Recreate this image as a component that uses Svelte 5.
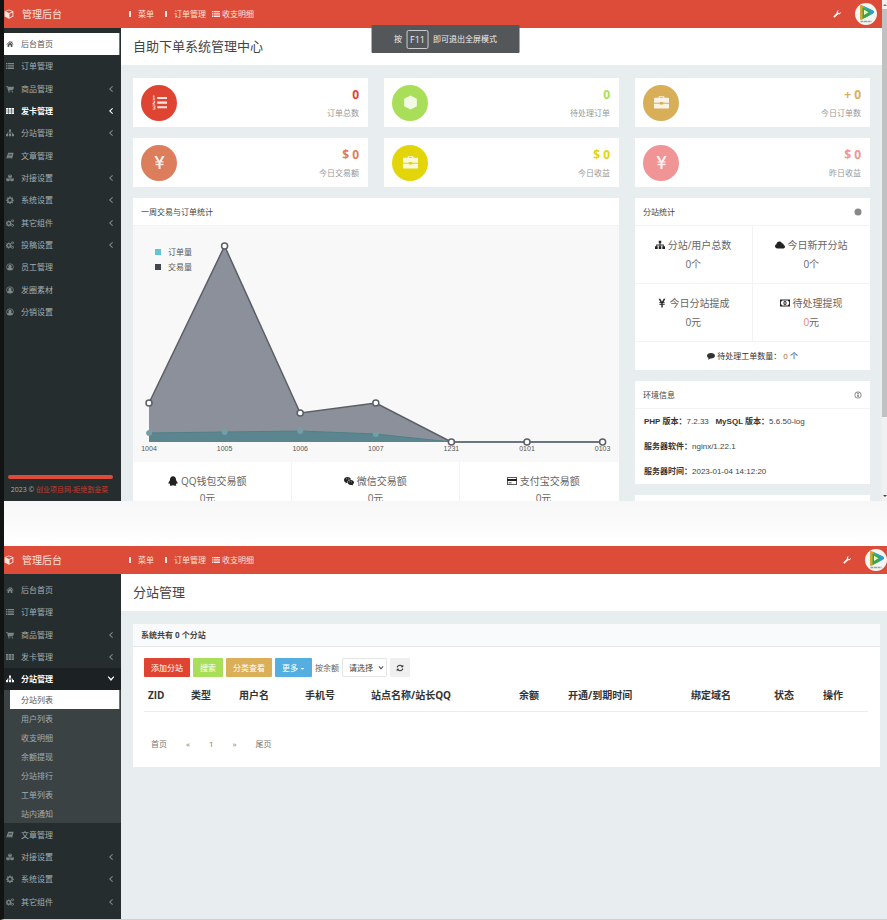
<script>
    // Iconos en una caja de 16 x 16
    const icons = {
        home: 'M8 2 1 8.3l.9 1L8 4l6.1 5.3.9-1-2.5-2.2V3h-2v1.3zM3.2 9.3 8 5.2l4.8 4.1V14H9.6v-3.6H6.4V14H3.2z',
        list: 'M0 2h3v2H0zM4 2h12v2H4zM0 5.4h3v2H0zM4 5.4h12v2H4zM0 8.8h3v2H0zM4 8.8h12v2H4zM0 12.2h3v2H0zM4 12.2h12v2H4z',
        cart: 'M0 2h3.2l.5 1.7H16L14.5 9.5 5.4 10.4l.2 1H14v1.3H4.4L2.2 3.4H0zM5 13h2v2H5zM12 13h2v2h-2z',
        table: 'M0 2h4.6v3.4H0zM5.6 2h4.6v3.4H5.6zM11.2 2H16v3.4h-4.8zM0 6.3h4.6v3.4H0zM5.6 6.3h4.6v3.4H5.6zM11.2 6.3H16v3.4h-4.8zM0 10.6h4.6V14H0zM5.6 10.6h4.6V14H5.6zM11.2 10.6H16V14h-4.8z',
        sitemap: 'M6 1h4v4.3H8.7v2H14V10h2v4.3h-4.3V10h1V8.6h-4V10H10v4.3H6V10h1.3V8.6h-4V10h1v4.3H0V10h2V7.3h5.3v-2H6z',
        book: 'M4.5 1.5h10.8L12.4 13H2.2C.9 13 .5 12 .9 10.8zM5.6 4l-.3 1h6.6l.3-1zM5 6.4l-.3 1h6.6l.3-1zM2.2 11.4h8.6l-.3.9H2.3z',
        cubes: 'M8 .8 11.6 2.5v4L8 8.2 4.4 6.5v-4zM8 2 6 3l2 1 2-1zM4 7.3l3.6 1.8v4L4 14.8.4 13v-4zM4 8.6l-2 .9 2 1 2-1zM12 7.3l3.6 1.8v4L12 14.8 8.4 13v-4zM12 8.6l-2 .9 2 1 2-1z',
        gear: 'M6.8 1h2.4l.4 2 1.2.5 1.7-1.1 1.7 1.7-1.1 1.7.5 1.2 2 .4v2.2l-2 .4-.5 1.2 1.1 1.7-1.7 1.7-1.7-1.1-1.2.5-.4 2H6.8l-.4-2-1.2-.5-1.7 1.1-1.7-1.7 1.1-1.7-.5-1.2-2-.4V7.3l2-.4.5-1.2L1.8 4l1.7-1.7 1.7 1.1 1.2-.5zM8 5.200a3.200 3.200 0 1 0 0 6.400 3.200 3.200 0 0 0 0-6.400z',
        gears: 'M4.6 3h1.800l.4 1.500 1 .4 1.300-.8L10.300 5.400l-.8 1.300.4 1 1.500.4v1.800l-1.500.4-.4 1 .8 1.300-1.200 1.200-1.300-.8-1 .4-.4 1.500H4.600l-.4-1.500-1-.4-1.300.8L.7 12.600l.8-1.300-.4-1L0 9.900V8.100l1.100-.4.4-1L.7 5.400 1.900 4.100l1.300.8 1-.4zM5.500 6.700a2.300 2.300 0 1 0 0 4.600 2.300 2.300 0 0 0 0-4.600zM13 .8l1.900.9L16 3.500l-1.100 2-1.900.9-1.900-.9-.7-2 .7-1.800zM13 2.400a1.200 1.200 0 1 0 0 2.400 1.200 1.200 0 0 0 0-2.400zM13 9.800l1.900.9 1.100 1.800-1.100 2-1.900.9-1.900-.9-.7-2 .7-1.800zM13 11.400a1.200 1.200 0 1 0 0 2.400 1.200 1.200 0 0 0 0-2.400z',
        user: 'M8 .8a7.200 7.200 0 1 0 0 14.400A7.200 7.200 0 0 0 8 .8zM8 2a6 6 0 0 1 4.900 9.400c-.5-1.500-1.300-2.300-2.500-2.500a3.300 3.300 0 1 0-4.800 0c-1.200.2-2 1-2.500 2.500A6 6 0 0 1 8 2z',
        bar: 'M6 2h4v12H6z',
        wrench: 'M15.600 4.200c.2 3-2.600 5.200-5.400 4.200L4 14.600c-1.600 1.600-4.200-.9-2.600-2.600l6.300-6.200C6.700 2.900 9 .2 12 .5L9.800 2.800l.4 2.700 2.800.5z',
        cube: 'M8 .8 15 3.700v8.200l-7 3.500-7-3.500V3.700zM8 2 3 4.100l5 2.100 5-2.100zM8.800 7.600v6l4.800-2.400V5.600z',
        hexagon: 'M8 .5 14.800 4v8L8 15.500 1.200 12V4z',
        listOl: 'M5.500 2H16v2.200H5.500zM5.500 7H16v2.200H5.500zM5.500 12H16v2.200H5.500zM1 .5h1.500V4h.8v.8H.7V4h.8V1.500H.8zM.6 6h2.800v1.900L1.800 9.200h1.600v.8H.6V8.900l1.800-1.500v-.6H.6zM.6 11.200h2.900v4.300H.6v-.8h2v-1H1.200V13h1.400v-1h-2z',
        yen: 'M2.500 1h2.700L8 6l2.800-5h2.700L10.300 6.600h2v1.500H9.100v1.200h3.200v1.500H9.100V15H6.900v-4.200H3.700V9.300h3.200V8.100H3.700V6.600h2z',
        briefcase: 'M5 3V1.200h6V3h4a1 1 0 0 1 1 1v4.200H9.800V7.400H6.200v.8H0V4a1 1 0 0 1 1-1zM6.200 3h3.600v-.8H6.200zM0 9.200h6.200v1h3.600v-1H16v4.300a1 1 0 0 1-1 1H1a1 1 0 0 1-1-1z',
        cloud: 'M4 13.500C1.600 13.500 0 12 0 10c0-1.700 1-2.800 2.300-3.300C2.500 4 4.400 2.300 6.900 2.300c2 0 3.500 1.100 4.100 2.800 1.900-.1 3 1.200 2.800 2.800 1.300.4 2.200 1.400 2.200 2.700 0 1.700-1.400 2.900-3.200 2.900z',
        money: 'M0 2.500h16v11H0zM3.200 4C3.200 5 2.500 5.700 1.500 5.700v4.600c1 0 1.700.7 1.700 1.700h9.600c0-1 .7-1.700 1.700-1.700V5.700c-1 0-1.700-.7-1.700-1.700zM8 4.700c1.600 0 2.500 1.400 2.500 3.300S9.600 11.300 8 11.300 5.500 9.900 5.500 8 6.400 4.700 8 4.700zM7.300 6.200v3.600h1.500V6.200z',
        comment: 'M8 2c4.600 0 8 2.400 8 5.600s-3.400 5.500-8 5.500l-1.400-.1C5.300 14.200 3.500 15 1.500 15c.9-.9 1.400-1.800 1.500-2.900C1.100 11.100 0 9.500 0 7.600 0 4.400 3.400 2 8 2z',
        qq: 'M8 .5c3 0 4.800 2.200 4.800 5.200l.3 1.300c1.600 1.900 2.600 4.200 2.100 5.100-.3.500-1 0-1.600-.7-.2.700-.6 1.400-1.200 2 1 .5 1.200 1.200.6 1.700-.8.6-3.600.6-5 -.2-1.400.8-4.200.8-5 .2-.6-.5-.4-1.200.6-1.700-.6-.6-1-1.300-1.200-2-.6.7-1.300 1.200-1.600.7-.5-.9.500-3.200 2.100-5.100l.3-1.300C3.200 2.700 5 .5 8 .5z',
        wechat: 'M5.700 1.500c3 0 5.300 1.700 5.600 4-3.500 0-6 2.200-6 4.700l.1.800-1-.1-2.200 1.200.6-1.900C1 9.200 0 7.900 0 6.200c0-2.700 2.500-4.700 5.700-4.700zM3.700 3.900v1.300H5V3.900zM7 3.900v1.300h1.300V3.900zM11 6.500c2.800 0 5 1.700 5 4 0 1.300-.8 2.400-2 3.200l.5 1.600-1.800-1-1.700.2c-2.800 0-5-1.700-5-4s2.200-4 5-4zM8.800 8.800v1h1v-1zM11.800 8.800v1h1v-1z',
        card: 'M0 2h16v12H0zM1.200 3.200v1.600h13.600V3.200zM1.200 8v4.800h13.600V8zM2.500 10.500h5v1h-5z',
        refresh: 'M1.500 7C1.900 3.700 4.600 1.500 8 1.500c1.800 0 3.300.7 4.500 1.800L14.500 1.500v5.200H9.300l1.900-1.900C10.300 4 9.200 3.500 8 3.500 5.700 3.500 4 4.900 3.600 7zM14.500 9c-.4 3.300-3.100 5.500-6.500 5.500-1.800 0-3.300-.7-4.500-1.800l-2 1.800V9.300h5.200l-1.900 1.900c.9.800 2 1.300 3.200 1.300 2.300 0 4-1.400 4.400-3.500z',
        left: 'M10.500 2 12 3.500 7 8l5 4.500-1.500 1.500L4 8z',
        down: 'M1.500 4.200 3 2.700l5 5 5-5 1.500 1.500L8 12z',
        caret: 'M2 6h12l-6 6z',
        dot: 'M8 1a7 7 0 1 0 0 14A7 7 0 0 0 8 1z',
        info: 'M8 1a7 7 0 1 0 0 14A7 7 0 0 0 8 1zM8 2.800a5.200 5.200 0 1 1 0 10.400A5.200 5.200 0 0 1 8 2.800zM6.400 4h3.200v2.200H6.400zM6.400 7.200h3.200V12H6.400z'
    };

    const menu = [
        { icon: 'home', text: '后台首页' },
        { icon: 'list', text: '订单管理' },
        { icon: 'cart', text: '商品管理', more: true },
        { icon: 'table', text: '发卡管理', more: true },
        { icon: 'sitemap', text: '分站管理', more: true },
        { icon: 'book', text: '文章管理' },
        { icon: 'cubes', text: '对接设置', more: true },
        { icon: 'gear', text: '系统设置', more: true },
        { icon: 'gears', text: '其它组件', more: true },
        { icon: 'gears', text: '投稿设置', more: true },
        { icon: 'user', text: '员工管理' },
        { icon: 'user', text: '发圈素材' },
        { icon: 'user', text: '分销设置' }
    ];
    const submenu = ['分站列表', '用户列表', '收支明细', '余额提现', '分站排行', '工单列表', '站内通知'];

    const stats = [
        { color: 'red', icon: 'listOl', value: '0', label: '订单总数' },
        { color: 'green', icon: 'hexagon', value: '0', label: '待处理订单' },
        { color: 'gold', icon: 'briefcase', value: '+ 0', label: '今日订单数' },
        { color: 'orange', icon: 'yen', value: '$ 0', label: '今日交易额' },
        { color: 'yellow', icon: 'briefcase', value: '$ 0', label: '今日收益' },
        { color: 'pink', icon: 'yen', value: '$ 0', label: '昨日收益' }
    ];
    const pays = [
        { icon: 'qq', text: 'QQ钱包交易额' },
        { icon: 'wechat', text: '微信交易额' },
        { icon: 'card', text: '支付宝交易额' }
    ];
    const sites = [
        { icon: 'sitemap', text: '分站/用户总数', unit: '个' },
        { icon: 'cloud', text: '今日新开分站', unit: '个' },
        { icon: 'yen', text: '今日分站提成', unit: '元' },
        { icon: 'money', text: '待处理提现', unit: '元', alert: true }
    ];

    // Datos de la gráfica semanal
    const days = ['1004', '1005', '1006', '1007', '1231', '0101', '0103'];
    const amount = [39, 196, 29, 39, 0, 0, 0];
    const orders = [9, 10, 11, 8, 0, 0, 0];
    const base = 216;
    const px = (i) => 16 + i * 75.6;
    const line = (values) => values.map((v, i) => `${px(i)},${base - v}`).join(' ');
    const area = (values) => `${px(0)},${base} ${line(values)} ${px(6)},${base}`;

    const columns = [
        ['ZID', 43], ['类型', 48], ['用户名', 66], ['手机号', 66], ['站点名称/站长QQ', 148],
        ['余额', 49], ['开通/到期时间', 123], ['绑定域名', 83], ['状态', 49], ['操作', 49]
    ];
    const total = columns.reduce((sum, c) => sum + c[1], 0);
</script>

{#snippet icon(name)}
    <svg class="icon" viewBox="0 0 16 16" aria-hidden="true"><path d={icons[name]} fill-rule="evenodd" /></svg>
{/snippet}

{#snippet topbar()}
    <header class="topbar">
        <a class="brand" href="#home">{@render icon('cube')}<span>管理后台</span></a>
        <nav class="topnav">
            <a href="#menu">{@render icon('bar')}菜单</a>
            <a href="#orders">{@render icon('bar')}订单管理</a>
            <a class="wide" href="#details">{@render icon('list')}收支明细</a>
        </nav>
        <button class="tool" aria-label="设置">{@render icon('wrench')}</button>
        <svg class="avatar" viewBox="0 0 22 22" aria-hidden="true">
            <circle cx="11" cy="11" r="11" fill="#f3f6f1" />
            <path d="M5 3.200Q5 2 6.500 2.200L18 7.600Q20 9 18 10.600L7 16.500Q5 17 5 15.500z" fill="#5cc243" />
            <path d="M7.500 2.500 18 7.600Q20 9 18 10.600L13 13.300 14 8z" fill="#2d9bd6" />
            <path d="M5 3.200Q5 2 6.500 2.200L8 3v12.800L7 16.500Q5 17 5 15.500z" fill="#d9a52d" />
            <path d="M7.500 4.500 15 8l-1.500 5L7.500 16z" fill="#36a64a" />
            <path d="M9 6.800 13.500 9.300 9 12z" fill="#e9fbc9" />
            <path d="M5.500 18.500h11" stroke="#9aa39e" stroke-width="1.500" stroke-dasharray="3 .5" />
        </svg>
    </header>
{/snippet}

{#snippet sidebar(current, lit, open)}
    <aside class="sidebar">
        <ul class="menu">
            {#each menu as item}
                <li>
                    <a class="item" class:current={item.text === current} class:lit={item.text === lit}
                        class:open={item.text === open} href="#{item.text}">
                        {@render icon(item.icon)}
                        <span>{item.text}</span>
                        {#if item.more}
                            <i class="arrow">{@render icon(item.text === open ? 'down' : 'left')}</i>
                        {/if}
                    </a>
                    {#if item.text === open}
                        <ul class="submenu">
                            {#each submenu as sub, i}
                                <li><a class:current={i === 0} href="#{sub}">{sub}</a></li>
                            {/each}
                        </ul>
                    {/if}
                </li>
            {/each}
        </ul>
        {#if !open}
            <div class="sidefoot">
                <div class="progress"></div>
                <p>2023 © <a href="#site">创业项目网-拒绝割韭菜</a></p>
            </div>
        {/if}
    </aside>
{/snippet}

<div class="page">
    <section class="screen first">
        <div class="window">
            {@render topbar()}
            <div class="body">
                {@render sidebar('后台首页', '发卡管理', '')}
                <main>
                    <h1>自助下单系统管理中心</h1>
                    <div class="grid">
                        {#each stats as s}
                            <div class="stat {s.color}">
                                <div class="round">{@render icon(s.icon)}</div>
                                <div class="figure">
                                    <strong>{s.value}</strong>
                                    <small>{s.label}</small>
                                </div>
                            </div>
                        {/each}

                        <div class="panel chart">
                            <h2>一周交易与订单统计</h2>
                            <svg viewBox="0 0 486 236" role="img" aria-label="一周交易与订单统计">
                                <rect width="486" height="236" fill="#f8f8f8" />
                                <polygon points={area(amount)} fill="#8b909a" />
                                <polygon points={area(orders)} fill="#5b868f" />
                                <polyline points={line(orders)} fill="none" stroke="#4f8089" />
                                <polyline points={line(amount)} fill="none" stroke="#5a5f66" stroke-width="1.500" />
                                {#each days as day, i}
                                    {#if orders[i]}
                                        <circle cx={px(i)} cy={base - orders[i]} r="2.500" fill="#7b9aa3" stroke="#6fa5ae" />
                                    {/if}
                                    <circle cx={px(i)} cy={base - amount[i]} r="3" fill="#fff" stroke="#5a5f66" stroke-width="1.500" />
                                    <text class="day" x={px(i)} y="225" text-anchor="middle">{day}</text>
                                {/each}
                                <rect x="22" y="23" width="6" height="6" fill="#62c4d4" />
                                <rect x="22" y="38" width="6" height="6" fill="#414750" />
                                <text x="35" y="29">订单量</text>
                                <text x="35" y="44">交易量</text>
                            </svg>
                            <div class="pays">
                                {#each pays as p}
                                    <div>
                                        <p>{@render icon(p.icon)} {p.text}</p>
                                        <p>0元</p>
                                    </div>
                                {/each}
                            </div>
                        </div>

                        <div class="side">
                            <div class="panel">
                                <h2>分站统计 {@render icon('dot')}</h2>
                                <div class="sites">
                                    {#each sites as s}
                                        <div>
                                            <p>{@render icon(s.icon)} {s.text}</p>
                                            <p><span class:alert={s.alert}>0</span>{s.unit}</p>
                                        </div>
                                    {/each}
                                </div>
                                <p class="tickets">{@render icon('comment')} 待处理工单数量： <em>0</em> 个</p>
                            </div>
                            <div class="panel">
                                <h2>环境信息 {@render icon('info')}</h2>
                                <div class="env">
                                    <p><b>PHP 版本：</b>7.2.33 &nbsp; <b>MySQL 版本：</b>5.6.50-log</p>
                                    <p><b>服务器软件：</b>nginx/1.22.1</p>
                                    <p><b>服务器时间：</b>2023-01-04 14:12:20</p>
                                </div>
                            </div>
                            <div class="panel next"></div>
                        </div>
                    </div>
                </main>
            </div>
        </div>
        <div class="scrollbar">
            <span></span>
            <div class="thumb"></div>
            <span class="end"></span>
        </div>
        <div class="toast">按 <kbd>F11</kbd> 即可退出全屏模式</div>
    </section>

    <div class="gap"></div>

    <section class="screen second">
        <div class="window">
            {@render topbar()}
            <div class="body">
                {@render sidebar('', '', '分站管理')}
                <main>
                    <h1>分站管理</h1>
                    <div class="list">
                        <h2>系统共有 0 个分站</h2>
                        <div class="listbody">
                            <div class="tools">
                                <button class="btn red">添加分站</button>
                                <button class="btn green">搜索</button>
                                <button class="btn gold">分类查看</button>
                                <button class="btn blue">更多 {@render icon('caret')}</button>
                                <label for="balance">按余额</label>
                                <div class="choice">
                                    <select id="balance">
                                        <option>请选择</option>
                                    </select>
                                    {@render icon('down')}
                                </div>
                                <button class="btn plain" aria-label="刷新">{@render icon('refresh')}</button>
                            </div>
                            <table>
                                <colgroup>
                                    {#each columns as c}
                                        <col style:width="{(c[1] / total) * 100}%" />
                                    {/each}
                                </colgroup>
                                <thead>
                                    <tr>
                                        {#each columns as c}
                                            <th>{c[0]}</th>
                                        {/each}
                                    </tr>
                                </thead>
                            </table>
                            <nav class="pager">
                                <a href="#first">首页</a>
                                <a href="#prev">«</a>
                                <a href="#1">1</a>
                                <a href="#next">»</a>
                                <a href="#last">尾页</a>
                            </nav>
                        </div>
                    </div>
                </main>
            </div>
        </div>
    </section>
</div>

<style>
    :global(body) {
        margin: 0;
        background: #fff;
    }
    .page {
        border-left: 4px solid #121313;
        border-bottom: 1px solid #d8cfcc;
        font: 8px/16px "Open Sans", "Noto Sans CJK SC", sans-serif;
        color: #666;
    }
    .page * {
        box-sizing: border-box;
    }
    h1, h2, p, ul {
        margin: 0;
        padding: 0;
        font-weight: normal;
    }
    ul {
        list-style: none;
    }
    a {
        color: inherit;
        text-decoration: none;
    }
    button {
        border: 0;
        padding: 0;
        background: none;
        color: inherit;
        font: inherit;
    }
    .icon {
        width: 8px;
        height: 8px;
        fill: currentColor;
        flex: none;
    }

    .screen {
        position: relative;
        display: flex;
        overflow: hidden;
    }
    .first {
        max-height: 501px;
    }
    .second {
        max-height: 373px;
    }
    .window {
        flex: 1;
        min-width: 0;
        display: flex;
        flex-direction: column;
    }
    .body {
        flex: 1;
        min-height: 0;
        display: flex;
    }
    .gap {
        height: 45px;
        background: linear-gradient(#f7f7f7, #fff);
    }

    /* barra superior */
    .topbar {
        flex: none;
        height: 28px;
        display: flex;
        align-items: center;
        background: #dd4b39;
        color: #fbe3df;
    }
    .first .topbar {
        padding-right: 5px;
    }
    .brand {
        width: 117px;
        display: flex;
        align-items: center;
        gap: 8px;
        font-size: 10px;
    }
    .brand .icon {
        width: 10px;
        height: 10px;
    }
    .topnav {
        flex: 1;
        display: flex;
        gap: 8px;
        padding-left: 5px;
    }
    .topnav a {
        display: flex;
        align-items: center;
        gap: 4px;
    }
    .topnav a.wide {
        gap: 2px;
        margin-left: -2px;
    }
    .tool {
        display: flex;
        margin-right: 14px;
        color: #fff;
    }
    .avatar {
        width: 22px;
        height: 22px;
    }

    /* menú lateral */
    .sidebar {
        width: 117px;
        flex: none;
        display: flex;
        flex-direction: column;
        justify-content: space-between;
        overflow: hidden;
        background: #252d2f;
        color: #a3adaf;
    }
    .menu {
        padding-top: 5px;
    }
    .item {
        height: 22px;
        display: flex;
        align-items: center;
        gap: 7px;
    }
    .menu > li:nth-child(3n) > .item {
        height: 23px;
    }
    .item .icon {
        margin-left: 2px;
        opacity: 0.7;
    }
    .arrow {
        display: flex;
        margin-left: auto;
        margin-right: 6px;
    }
    .current {
        margin-right: 1px;
        border-right: 1px solid #dd4b39;
        background: #fff;
        color: #555;
    }
    .lit, .open {
        color: #fff;
        font-weight: bold;
    }
    .current .icon, .lit .icon, .open .icon {
        opacity: 1;
    }
    .open {
        background: #1c2224;
    }
    .submenu {
        padding-left: 6px;
        background: #3a4243;
    }
    .submenu a {
        display: block;
        padding-left: 11px;
        line-height: 19px;
    }
    .sidefoot {
        padding: 0 4px 3px;
        font-size: 7px;
        text-align: center;
    }
    .progress {
        height: 4px;
        margin: 0 4px 3px 0;
        border-radius: 2px;
        background: #dd4b39;
    }
    .sidefoot p {
        padding-right: 6px;
    }
    .sidefoot a {
        color: #c93a2c;
    }

    main {
        flex: 1;
        min-width: 0;
        background: #e8edf0;
    }
    h1 {
        padding-left: 12px;
        background: #fff;
        font-size: 13px;
        line-height: 37px;
        color: #444;
    }
    .grid {
        display: grid;
        grid-template-columns: repeat(3, 1fr);
        gap: 11px 16px;
        padding: 13px 12px 0;
    }
    .stat {
        display: flex;
        justify-content: space-between;
        align-items: center;
        height: 49px;
        padding: 0 9px 0 8px;
        background: #fff;
        text-align: right;
    }
    .round {
        width: 36px;
        height: 36px;
        display: grid;
        place-items: center;
        border-radius: 50%;
        background: currentColor;
    }
    .round .icon {
        width: 15px;
        height: 15px;
        fill: #fff;
        opacity: 0.85;
    }
    .figure {
        padding-top: 2px;
    }
    .stat strong {
        display: block;
        font-size: 12px;
        line-height: 18px;
    }
    .stat small {
        display: block;
        font-size: 8px;
        line-height: 18px;
        color: #999;
    }
    .stat.red { color: #df4432; }
    .stat.green { color: #a9df58; }
    .stat.gold { color: #d9ae59; }
    .stat.orange { color: #dc7d5b; }
    .stat.yellow { color: #e2d60a; }
    .stat.pink { color: #f19495; }

    .panel {
        background: #fff;
        overflow: hidden;
    }
    .panel h2 {
        height: 28px;
        display: flex;
        align-items: center;
        justify-content: space-between;
        padding: 0 8px;
        border-bottom: 1px solid #f3f3f3;
        font-size: 8px;
        color: #444;
    }
    .panel h2 .icon {
        color: #888;
    }
    .chart {
        grid-column: span 2;
    }
    .chart > svg {
        display: block;
        width: 100%;
        height: auto;
    }
    .chart text {
        font-size: 8px;
        fill: #555;
    }
    .chart .day {
        font: 7px "Liberation Sans", sans-serif;
    }
    .pays {
        display: grid;
        grid-template-columns: repeat(3, 1fr);
        margin: 0 -9px;
        font-size: 10px;
        line-height: 17px;
        font-weight: 300;
        text-align: center;
    }
    .pays > div {
        padding: 11px 0;
        border-right: 1px solid #f3f3f3;
    }
    .pays .icon, .sites .icon {
        width: 10px;
        height: 10px;
        vertical-align: -1px;
        color: #222;
    }
    .side {
        display: flex;
        flex-direction: column;
        gap: 11px;
    }
    .sites {
        display: grid;
        grid-template-columns: 1fr 1fr;
        font-size: 10px;
        line-height: 19px;
        font-weight: 300;
        text-align: center;
    }
    .sites > div {
        padding: 10px 0 9px;
        border-bottom: 1px solid #f3f3f3;
    }
    .sites > div:nth-child(odd) {
        border-right: 1px solid #f3f3f3;
    }
    .alert {
        color: #e8837b;
    }
    .tickets {
        line-height: 28px;
        text-align: center;
        color: #333;
    }
    .tickets .icon {
        vertical-align: -1px;
    }
    .tickets em {
        font-style: normal;
        color: #a56a3c;
    }
    .env {
        padding: 0 9px;
        font-family: "Liberation Sans", "Noto Sans CJK SC", sans-serif;
        line-height: 25px;
        color: #444;
    }
    .env b {
        color: #333;
    }
    .next {
        height: 28px;
    }

    .scrollbar {
        width: 5px;
        height: 501px;
        display: flex;
        flex-direction: column;
        align-items: center;
        padding: 4px 0;
        background: #f1f1f1;
    }
    .scrollbar span {
        border: 2px solid transparent;
        border-top: 0;
        border-bottom: 2px solid #777;
    }
    .scrollbar .end {
        margin-top: auto;
        border-top: 2px solid #444;
        border-bottom: 0;
    }
    .thumb {
        width: 5px;
        height: 408px;
        margin-top: 3px;
        background: #c1c1c1;
    }
    .toast {
        position: absolute;
        top: 25px;
        left: 50%;
        transform: translateX(-50%);
        height: 28px;
        display: flex;
        align-items: center;
        gap: 4px;
        padding: 0 23px;
        border-radius: 1px;
        background: #54575a;
        color: #eee;
        white-space: nowrap;
    }
    .toast kbd {
        padding: 0 3px;
        border: 1px solid #ccc;
        border-radius: 2px;
        font: 9px/17px "Open Sans", sans-serif;
    }

    /* listado de sitios */
    .list {
        margin: 13px 7px 0 12px;
        background: #fff;
    }
    .list h2 {
        height: 23px;
        padding: 0 8px;
        border-bottom: 1px solid #e4e9ec;
        background: #f9fafc;
        font-size: 8px;
        line-height: 22px;
        font-weight: bold;
        color: #444;
    }
    .listbody {
        padding: 11px 12px 13px 11px;
    }
    .tools {
        display: flex;
        align-items: center;
        gap: 3px;
    }
    .btn {
        height: 19px;
        padding: 0 7px;
        border-radius: 1px;
        color: #fff;
        white-space: nowrap;
    }
    .btn.red { background: #df4432; }
    .btn.green { background: #a9df58; }
    .btn.gold { background: #dbae58; }
    .btn.blue { background: #54aee0; }
    .btn.blue .icon {
        width: 5px;
        height: 5px;
    }
    .btn.plain {
        display: flex;
        align-items: center;
        padding: 0 6px;
        background: #efefef;
        color: #333;
    }
    .choice {
        display: grid;
        align-items: center;
        width: 45px;
    }
    .choice select, .choice .icon {
        grid-area: 1 / 1;
    }
    .choice .icon {
        width: 6px;
        height: 6px;
        justify-self: end;
        margin-right: 3px;
        color: #333;
        pointer-events: none;
    }
    select {
        appearance: none;
        width: 100%;
        height: 19px;
        padding: 0 6px;
        border: 1px solid #e6e6e6;
        border-radius: 1px;
        background: #fff;
        color: #444;
        font: inherit;
    }
    table {
        width: 100%;
        table-layout: fixed;
        border-collapse: collapse;
    }
    th {
        height: 34px;
        padding: 2px 4px 0;
        border-bottom: 1px solid #eaedef;
        font-size: 10px;
        text-align: left;
        white-space: nowrap;
        color: #333;
    }
    .pager {
        display: flex;
        gap: 19px;
        padding: 22px 7px 0;
        line-height: 20px;
        color: #777;
    }
</style>
